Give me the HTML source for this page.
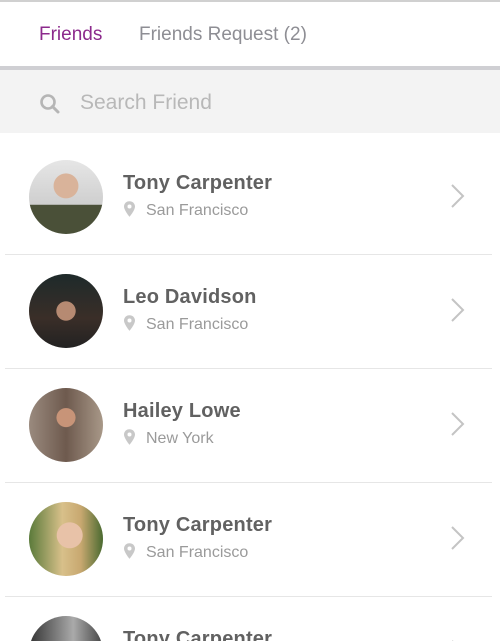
<!DOCTYPE html>
<html><head><style>
*{margin:0;padding:0;box-sizing:border-box}
html,body{width:500px;height:641px;overflow:hidden}
body{background:#fff;font-family:"Liberation Sans",sans-serif;position:relative}
.top{position:absolute;top:0;left:0;width:500px;height:2px;background:#d0d0d0}
.tab{position:absolute;top:24px;font-size:19px}
.bar{position:absolute;top:66px;left:0;width:500px;height:4px;background:#cfcfd3}
.search{position:absolute;top:70px;left:0;width:500px;height:63px;background:#f3f3f3}
.search span{position:absolute;left:80px;top:21px;font-size:21px;color:#b8b8b8}
.row{position:absolute;left:0;width:500px;height:114px}
.av{position:absolute;left:29px;top:6px;width:74px;height:74px;border-radius:50%}
.name{position:absolute;left:123px;top:18px;font-size:20px;color:#616161;font-weight:bold;letter-spacing:.2px}
.loc{position:absolute;left:146px;top:48px;font-size:16px;color:#9a9a9a}
.pin{position:absolute;left:124px;top:47px}
.chev{position:absolute;left:450px;top:29px}
.div{position:absolute;left:5px;top:100px;width:487px;height:1px;background:#e6e6e6}
</style></head><body>
<div class="top"></div>
<div class="tab" style="left:39px;color:#8c2a8c">Friends</div>
<div class="tab" style="left:139px;color:#8e8e94">Friends Request (2)</div>
<div class="bar"></div>
<div class="search">
<svg style="position:absolute;left:39px;top:23px" width="22" height="22" viewBox="0 0 22 22"><circle cx="9" cy="9" r="6.5" fill="none" stroke="#b5b5b5" stroke-width="2.6"/><line x1="13.5" y1="13.5" x2="19" y2="19" stroke="#b5b5b5" stroke-width="3" stroke-linecap="round"/></svg>
<span>Search Friend</span></div>

<div class="row" style="top:154px"><div class="av" style="background:radial-gradient(circle at 50% 35%,#d9b39a 0 20%,transparent 21%),linear-gradient(#e6e6e6 0,#cfcfcf 60%,#4a5038 61%)"></div>
<svg class="pin" width="11" height="16" viewBox="0 0 12 17"><path d="M6 0C2.7 0 0 2.6 0 5.8 0 10 6 17 6 17s6-7 6-11.2C12 2.6 9.3 0 6 0z" fill="#c8c8c8"/><circle cx="6" cy="5.8" r="2.2" fill="#fff"/></svg>
<div class="name">Tony Carpenter</div><div class="loc">San Francisco</div>
<svg class="chev" width="16" height="26" viewBox="0 0 16 26"><path d="M2 2l11 11L2 24" fill="none" stroke="#c4c4c4" stroke-width="2"/></svg><div class="div"></div></div>

<div class="row" style="top:268px"><div class="av" style="background:radial-gradient(circle at 50% 50%,#b68a72 0 18%,transparent 19%),linear-gradient(#1e2a2a 0,#3a2e28 60%,#222 100%)"></div>
<svg class="pin" width="11" height="16" viewBox="0 0 12 17"><path d="M6 0C2.7 0 0 2.6 0 5.8 0 10 6 17 6 17s6-7 6-11.2C12 2.6 9.3 0 6 0z" fill="#c8c8c8"/><circle cx="6" cy="5.8" r="2.2" fill="#fff"/></svg>
<div class="name">Leo Davidson</div><div class="loc">San Francisco</div>
<svg class="chev" width="16" height="26" viewBox="0 0 16 26"><path d="M2 2l11 11L2 24" fill="none" stroke="#c4c4c4" stroke-width="2"/></svg><div class="div"></div></div>

<div class="row" style="top:382px"><div class="av" style="background:radial-gradient(circle at 50% 40%,#c89478 0 16%,transparent 17%),linear-gradient(90deg,#9a8a7e,#6e5a4e 50%,#a89888);"></div>
<svg class="pin" width="11" height="16" viewBox="0 0 12 17"><path d="M6 0C2.7 0 0 2.6 0 5.8 0 10 6 17 6 17s6-7 6-11.2C12 2.6 9.3 0 6 0z" fill="#c8c8c8"/><circle cx="6" cy="5.8" r="2.2" fill="#fff"/></svg>
<div class="name">Hailey Lowe</div><div class="loc">New York</div>
<svg class="chev" width="16" height="26" viewBox="0 0 16 26"><path d="M2 2l11 11L2 24" fill="none" stroke="#c4c4c4" stroke-width="2"/></svg><div class="div"></div></div>

<div class="row" style="top:496px"><div class="av" style="background:radial-gradient(circle at 55% 45%,#e8c2a8 0 22%,transparent 23%),linear-gradient(90deg,#5a7a3a,#d8c08a 45%,#c8a870 70%,#4a6a30)"></div>
<svg class="pin" width="11" height="16" viewBox="0 0 12 17"><path d="M6 0C2.7 0 0 2.6 0 5.8 0 10 6 17 6 17s6-7 6-11.2C12 2.6 9.3 0 6 0z" fill="#c8c8c8"/><circle cx="6" cy="5.8" r="2.2" fill="#fff"/></svg>
<div class="name">Tony Carpenter</div><div class="loc">San Francisco</div>
<svg class="chev" width="16" height="26" viewBox="0 0 16 26"><path d="M2 2l11 11L2 24" fill="none" stroke="#c4c4c4" stroke-width="2"/></svg><div class="div"></div></div>

<div class="row" style="top:610px"><div class="av" style="background:linear-gradient(90deg,#333,#aaa 60%,#444)"></div>
<div class="name">Tony Carpenter</div>
<svg class="chev" width="16" height="26" viewBox="0 0 16 26"><path d="M2 2l11 11L2 24" fill="none" stroke="#c4c4c4" stroke-width="2"/></svg></div>
</body></html>
